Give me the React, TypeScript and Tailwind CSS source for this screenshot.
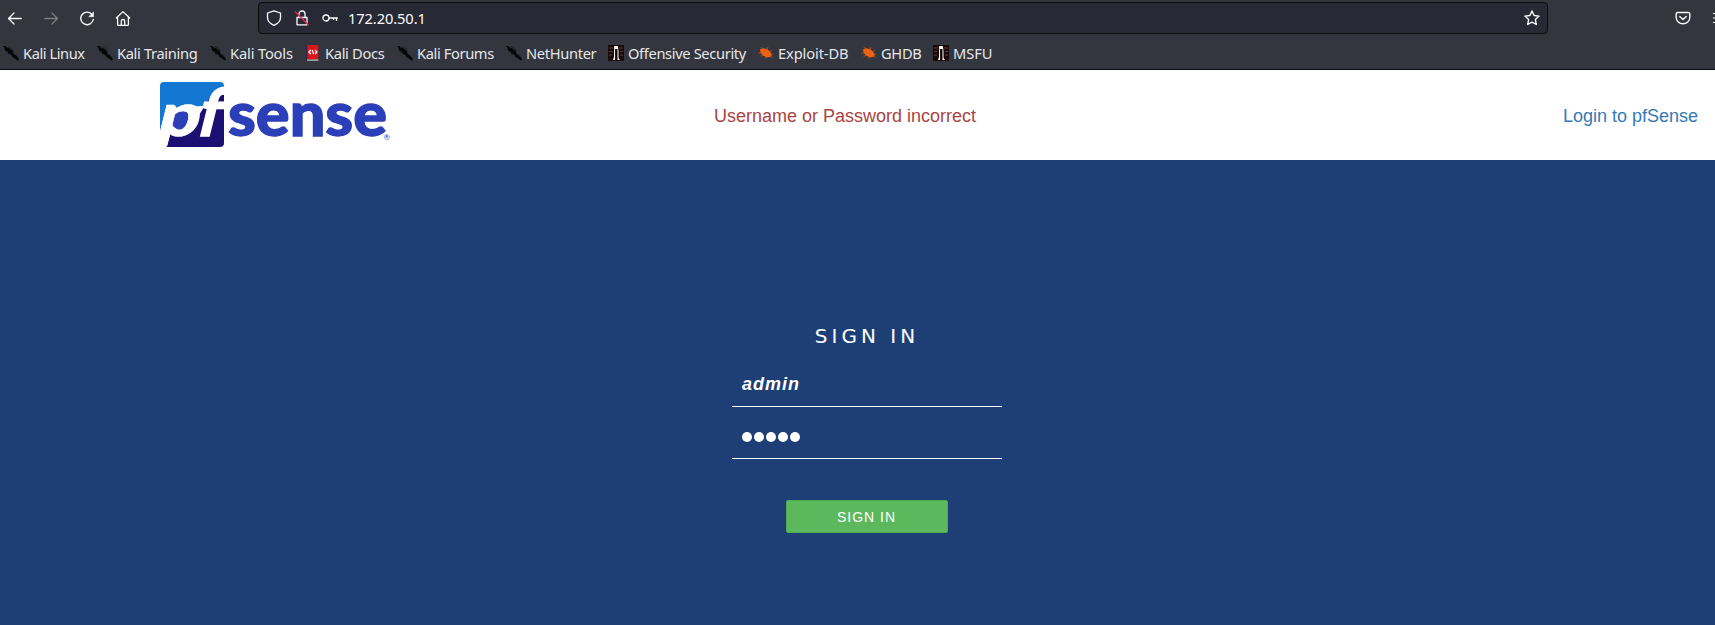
import React from "react";

type IconKind = "kali" | "docs" | "offsec" | "bug";

const bookmarks: { label: string; icon: IconKind; width: string; tracking: string }[] = [
  { label: "Kali Linux", icon: "kali", width: "w-[94px]", tracking: "tracking-[-0.44px]" },
  { label: "Kali Training", icon: "kali", width: "w-[113px]", tracking: "tracking-[-0.34px]" },
  { label: "Kali Tools", icon: "kali", width: "w-[95px]", tracking: "tracking-[-0.15px]" },
  { label: "Kali Docs", icon: "docs", width: "w-[92px]", tracking: "tracking-[-0.32px]" },
  { label: "Kali Forums", icon: "kali", width: "w-[109px]", tracking: "tracking-[-0.38px]" },
  { label: "NetHunter", icon: "kali", width: "w-[102px]", tracking: "tracking-[-0.33px]" },
  { label: "Offensive Security", icon: "offsec", width: "w-[150px]", tracking: "tracking-[-0.35px]" },
  { label: "Exploit-DB", icon: "bug", width: "w-[103px]", tracking: "tracking-[-0.12px]" },
  { label: "GHDB", icon: "bug", width: "w-[72px]", tracking: "tracking-[-0.3px]" },
  { label: "MSFU", icon: "offsec", width: "w-[70px]", tracking: "tracking-[-0.1px]" },
];

function BookmarkIcon({ kind }: { kind: IconKind }) {
  return (
    <svg width="16" height="16" viewBox="0 0 16 16" className="shrink-0">
      {kind === "kali" && (
        <>
          <path d="M0 1h2.500l1 1.500L6 3l2 1.500L10 6l.5 3 2.500 1.500 2 2L16 15l-1.500.5L12 13.500 9.500 12 8 9.500 5.500 9 4.500 6.500 2 5.500 1.500 3z" fill="#050607" />
          <path d="M5 1.500 8 3l2.500 2M4 8l-1-1.500M10.500 9l3 1.200" stroke="#1b1d21" strokeWidth=".8" fill="none" />
        </>
      )}
      {kind === "docs" && (
        <>
          <path d="M1 .5h1.500v15H1z" fill="#2c2a4a" />
          <path d="M2.500 0h10.800v14.500H2.500z" fill="#d9161b" />
          <path d="M2 14.500h11.300v1.200H2z" fill="#c9c9cf" />
          <path d="M5.800 5 3.800 7l2 2M10 5l2 2-2 2M7.200 5l1.400 4" stroke="#fff" strokeWidth="1.200" fill="none" />
        </>
      )}
      {kind === "offsec" && (
        <>
          <path d="M0 0h16v16H0z" fill="#1c0808" />
          <path d="M1 3h4M11 3h4M1 6.500h3M12 6.500h3M1 10h3M12 10h3" stroke="#5b4443" strokeWidth=".9" />
          <path d="M6.200 1h3.600l.7 5v7l1.500 2H9.500V4H7.300v11H5L6 12z" fill="#fff" />
          <path d="M7.300 4h1.700v11H7.300z" fill="#050505" />
        </>
      )}
      {kind === "bug" && (
        <>
          <path d="M2 4.500 5 3.200 9 4l3 2.500 2 3.500-1.500 1.700-3.500.8L5 10.500 2.500 7.500z" fill="#ee6113" />
          <path d="M.5 8h3M4.500 4 2.800 2M9 4.500l1-2.500M11.500 6.500l2-1M13 9.500l2-.3M5 10.500l-2.500.7M8 12l-1 1.500M12 11l2.500 1.500" stroke="#b9531c" strokeWidth=".9" />
        </>
      )}
    </svg>
  );
}

function Toolbar() {
  return (
    <div className="flex h-9 items-center text-[#fbfbfe]">
      <div className="flex w-[258px] items-center gap-5 pl-[7px]">
        <svg width="16" height="16" viewBox="0 0 16 16" fill="none" stroke="currentColor" strokeWidth="1.300" strokeLinecap="round" strokeLinejoin="round">
          <path d="M14.300 8.500H1.700M7 3 1.500 8.500 7 14" />
        </svg>
        <svg width="16" height="16" viewBox="0 0 16 16" fill="none" stroke="#7d7e85" strokeWidth="1.300" strokeLinecap="round" strokeLinejoin="round">
          <path d="M1.700 8.500h12.600M9 3l5.500 5.500L9 14" />
        </svg>
        <svg width="16" height="16" viewBox="0 0 16 16" fill="none" stroke="currentColor" strokeWidth="1.400" strokeLinecap="round">
          <path d="M12.800 4.200A6.300 6.300 0 1 0 14.300 9.500" />
          <path d="M14.500 2.300v4.400h-4.400z" fill="currentColor" strokeWidth=".6" />
        </svg>
        <svg width="16" height="16" viewBox="0 0 16 16" fill="none" stroke="currentColor" strokeWidth="1.300" strokeLinecap="round" strokeLinejoin="round">
          <path d="M1.300 8 8 1.600 14.700 8M2.600 7.200v7.200a1 1 0 0 0 1 1h8.800a1 1 0 0 0 1-1V7.200M6.300 15.200v-4a1.700 1.700 0 0 1 3.400 0v4" />
        </svg>
      </div>
      <div className="flex h-8 w-[1290px] items-center rounded border border-[#0c0c0d] bg-[#272935] px-[7px]">
        <svg width="16" height="16" viewBox="0 0 16 16" fill="none" stroke="currentColor" strokeWidth="1.300" strokeLinejoin="round">
          <path d="M8 .9 14.500 3v4.500c0 3.300-2.500 6.200-6.500 7.800C4 13.700 1.500 10.800 1.500 7.500V3z" />
        </svg>
        <svg width="16" height="16" viewBox="0 0 16 16" fill="none" stroke="currentColor" strokeWidth="1.300" strokeLinejoin="round" className="ml-3">
          <path d="M3 7.500h10v7.300H3zM5 7.500V4a3 3 0 0 1 6 0v3.500" />
          <path d="M1 1.500 14.500 15" stroke="#e22850" strokeWidth="1.500" />
        </svg>
        <svg width="16" height="16" viewBox="0 0 16 16" fill="none" stroke="currentColor" strokeWidth="1.300" className="ml-3">
          <circle cx="4" cy="8" r="3" />
          <path d="M7 8h8.800M14.500 8v3M11.500 8v2" />
        </svg>
        <span className="ml-2.5 grow text-[14.667px] tracking-[-0.1px]">172.20.50.1</span>
        <svg width="16" height="16" viewBox="0 0 16 16" fill="none" stroke="currentColor" strokeWidth="1.400" strokeLinejoin="round">
          <path d="m8 1 2.100 4.500 4.900.6-3.600 3.400.9 5L8 12.100l-4.300 2.400.9-5L1 6.100l4.900-.6z" />
        </svg>
      </div>
      <div className="flex grow items-center justify-end gap-[22px]">
        <svg width="16" height="16" viewBox="0 0 16 16" fill="none" stroke="currentColor" strokeWidth="1.400" strokeLinecap="round" strokeLinejoin="round">
          <path d="M2.500 2.500h11a1.300 1.300 0 0 1 1.300 1.300V7.500a6.800 6.300 0 0 1-13.600 0V3.800a1.300 1.300 0 0 1 1.300-1.300zM4.800 6.500 8 9.500l3.200-3" />
        </svg>
        <svg width="2" height="16" viewBox="0 0 2 16" stroke="currentColor" strokeWidth="1.200">
          <path d="M0 3.500h2M0 8h2M0 12.500h2" />
        </svg>
      </div>
    </div>
  );
}

function BookmarksBar() {
  return (
    <div className="flex h-[33px] items-center pl-[3px] text-[14.667px] text-[#e6e6ea]">
      {bookmarks.map((b) => (
        <div key={b.label} className={`flex shrink-0 items-center gap-1 whitespace-nowrap ${b.width} ${b.tracking}`}>
          <BookmarkIcon kind={b.icon} />
          <span>{b.label}</span>
        </div>
      ))}
    </div>
  );
}

function PfSenseLogo() {
  return (
    <svg width="245" height="90" viewBox="150 70 245 90" className="overflow-visible font-['Lato',sans-serif] font-black">
      <defs>
        <clipPath id="badge">
          <rect x="160" y="82" width="64" height="65" rx="4" />
        </clipPath>
      </defs>
      <g clipPath="url(#badge)">
        <path d="M160 82h65v24H202l-34 2-8 26z" fill="#1478d2" />
        <path d="M225 94H212L196 120l-12 14H169l-4 14h60z" fill="#1c0f72" />
        <ellipse cx="181" cy="120" rx="10" ry="10" fill="#2a3fb8" />
        <path d="M160 136 163 124l7 10-4 14h-6z" fill="#fff" />
      </g>
      <g fill="#fff" stroke="#fff">
        <text transform="translate(155 136) skewX(-14)" fontSize="60" strokeWidth=".6" textLength="42" lengthAdjust="spacingAndGlyphs">p</text>
        <text transform="translate(195 136) skewX(-14)" fontSize="66" strokeWidth="1.500" textLength="22" lengthAdjust="spacingAndGlyphs">f</text>
      </g>
      <text x="228" y="135.500" fontSize="60" fill="#2a3fb8" stroke="#2a3fb8" strokeWidth="1.300" textLength="159" lengthAdjust="spacingAndGlyphs">sense</text>
      <text x="383.500" y="139.500" fontSize="8" className="font-normal" fill="#2a3fb8">®</text>
    </svg>
  );
}

export default function App() {
  return (
    <div className="flex h-[625px] w-[1715px] flex-col overflow-hidden bg-[#1e3f75] font-['Liberation_Sans',Arial,sans-serif]">
      <header className="h-[70px] border-b border-[#0c0c0d] bg-[#33363e] font-['Noto_Sans',sans-serif]">
        <Toolbar />
        <BookmarksBar />
      </header>
      <div className="flex h-[90px] shrink-0 items-center bg-white text-lg">
        <div className="w-[714px] pl-[150px]">
          <PfSenseLogo />
        </div>
        <p className="grow pt-0.5 text-[#a94442]">Username or Password incorrect</p>
        <a className="pt-0.5 pr-[17px] text-[#337ab7]">Login to pfSense</a>
      </div>
      <main className="ml-[732px] flex w-[270px] flex-col items-center pt-[160px] text-white">
        <h1 className="font-['DejaVu_Sans',sans-serif] text-[20px] leading-8 tracking-[4px]">SIGN IN</h1>
        <div className="mt-4 flex h-[39px] w-full items-start border-b border-white pl-2.5 text-lg leading-8 font-bold tracking-[1px] italic">admin</div>
        <div className="flex h-[52px] w-full items-center gap-[2px] border-b border-white pt-2 pl-2.5">
          {[0, 1, 2, 3, 4].map((n) => (
            <span key={n} className="size-2.5 rounded-full bg-white" />
          ))}
        </div>
        <button className="mt-[41px] h-[33px] w-[162px] rounded-xs border border-[#4cae4c] bg-[#5cb85c] pr-px text-sm tracking-[1px]">SIGN IN</button>
      </main>
    </div>
  );
}
